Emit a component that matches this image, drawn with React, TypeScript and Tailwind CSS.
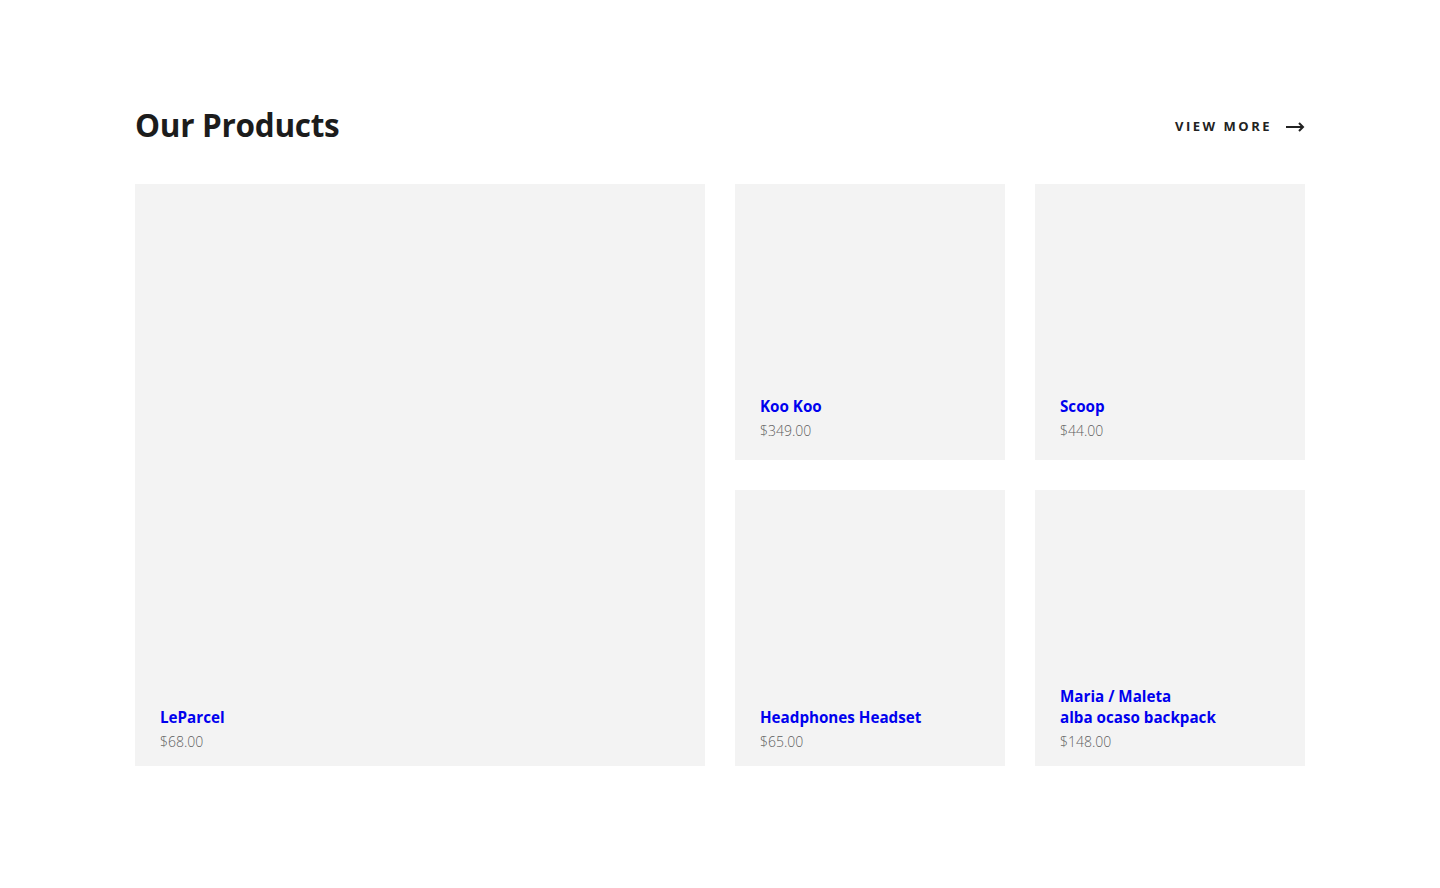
const products = {
  featured: { name: "LeParcel", price: "$68.00" },
  rest: [
    { name: "Koo Koo", price: "$349.00", top: true },
    { name: "Scoop", price: "$44.00", top: true },
    { name: "Headphones Headset", price: "$65.00", top: false },
    { name: "Maria / Maleta\nalba ocaso backpack", price: "$148.00", top: false },
  ],
};

function ProductCard({ name, price, className = "" }: { name: string; price: string; className?: string }) {
  return (
    <a href="#" className={`flex flex-col justify-end bg-[#f3f3f3] px-[25px] no-underline ${className}`}>
      <h3 className="whitespace-pre-line text-[15.2px] font-bold leading-[21px] text-[#0000ee]">{name}</h3>
      <p className="mt-[3px] text-[14px] font-light leading-[21px] text-[#5f5f5f]">{price}</p>
    </a>
  );
}

export default function App() {
  return (
    <div className="min-h-screen bg-white font-['Open_Sans','Noto_Sans',sans-serif]">
      <section className="mx-auto w-[1170px] pt-[101px]">
        <div className="mb-[35px] flex h-12 items-center justify-between">
          <h2 className="text-[31.5px] font-bold tracking-[-0.3px] text-[#1c1c1c]">Our Products</h2>
          <a href="#" className="mt-[3px] flex items-center gap-[14px] text-[13px] font-bold tracking-[2.5px] text-[#222]">
            VIEW MORE
            <svg width="19" height="10" viewBox="0 0 19 10" fill="none" stroke="#222" strokeWidth="2">
              <path d="M0 5h17" />
              <path d="M13 1l4 4-4 4" />
            </svg>
          </a>
        </div>
        <div className="grid grid-cols-[570px_270px_270px] grid-rows-[276px_276px] gap-[30px]">
          <ProductCard name={products.featured.name} price={products.featured.price} className="row-span-2 pb-[14px]" />
          {products.rest.map((p) => (
            <ProductCard key={p.name} name={p.name} price={p.price} className={p.top ? "pb-[19px]" : "pb-[14px]"} />
          ))}
        </div>
      </section>
    </div>
  );
}
